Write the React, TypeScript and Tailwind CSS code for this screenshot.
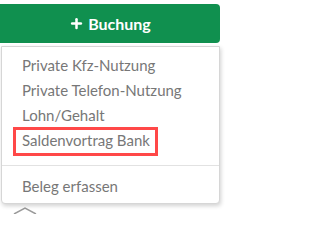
import { Plus } from 'lucide-react'

const ITEMS = ['Private Kfz-Nutzung', 'Private Telefon-Nutzung', 'Lohn/Gehalt']

export default function App() {
  return (
    <div className="relative h-[214px] w-[226px] overflow-hidden bg-white font-['Lato','Liberation_Sans',sans-serif]">
      <div className="pt-1">
        <button className="flex h-[39px] w-[220px] items-center justify-center gap-1 rounded-r-[4px] bg-[#10904f] text-[16px] font-bold text-white">
          <Plus size={15} strokeWidth={4} />
          Buchung
        </button>
      </div>

      {/* background icon peeking out under the menu */}
      <svg className="absolute left-[12px] top-[205px]" width="26" height="10" viewBox="0 0 26 10" fill="none">
        <path d="M2 9 L13 3 L24 9" stroke="#9a9a9a" strokeWidth="1.5" />
      </svg>

      <div className="relative z-10 ml-px mt-[3px] w-[219px] rounded-b-[4px] border border-[#d6d6d6] bg-white pb-1 pt-[6px] shadow-[1px_2px_4px_rgba(0,0,0,0.18)]">
        <ul className="text-[15px] leading-[25px] text-[#777]">
          {ITEMS.map((item) => (
            <li key={item} className="px-5">
              {item}
            </li>
          ))}
          <li className="relative px-5">
            <div className="absolute left-[11px] top-[-1px] h-[29px] w-[145px] border-3 border-[#ff4848]" />
            Saldenvortrag Bank
          </li>
        </ul>
        <div className="mb-2 mt-3 h-px bg-[#e2e2e2]" />
        <div className="px-5 text-[15px] leading-[25px] text-[#777]">Beleg erfassen</div>
      </div>
    </div>
  )
}
